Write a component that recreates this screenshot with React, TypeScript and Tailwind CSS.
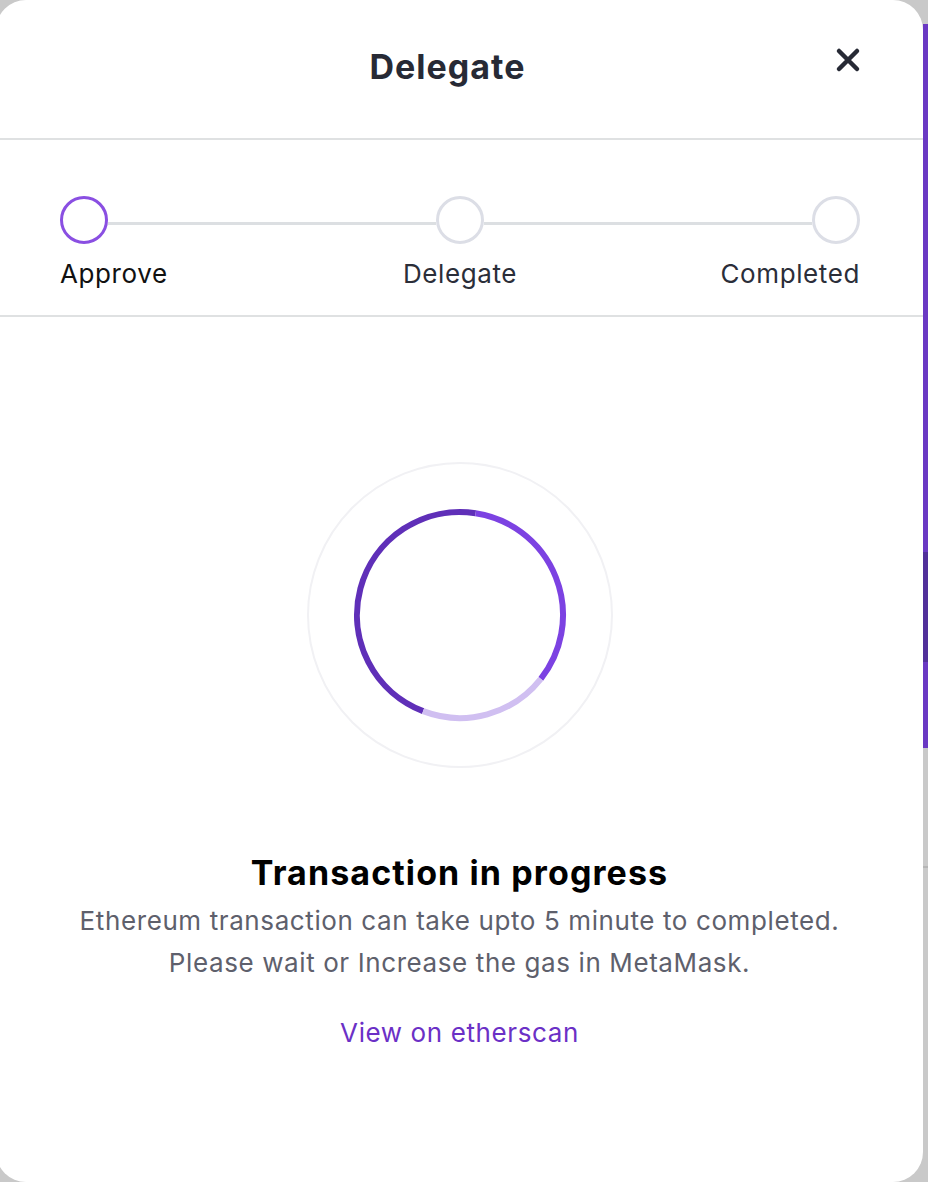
import React from 'react';

const steps = [
  { name: 'Approve', active: true },
  { name: 'Delegate', active: false },
  { name: 'Completed', active: false },
];

const StepCircle = ({ active }: { active: boolean }) => (
  <div
    className={
      active
        ? 'w-[48px] h-[48px] rounded-full border-[3px] border-[#8a4fe2] shrink-0'
        : 'w-[48px] h-[48px] rounded-full border-[3px] border-[#dcdee6] shrink-0'
    }
  />
);

const Spinner = () => (
  <svg width="310" height="310" viewBox="0 0 310 310" fill="none">
    <circle cx="155" cy="155" r="152" stroke="#f1f1f4" strokeWidth="2" />
    <path d="M118.09 251.16 A103 103 0 0 1 170.58 53.18" stroke="#5f2fb8" strokeWidth="6" />
    <path d="M170.58 53.18 A103 103 0 0 1 235.83 218.84" stroke="#7c42e2" strokeWidth="6" />
    <path d="M235.83 218.84 A103 103 0 0 1 118.09 251.16" stroke="#d0bff1" strokeWidth="6" />
  </svg>
);

const App = () => {
  return (
    <div
      className="w-[928px] h-[1182px] flex bg-[#c9c9c9] overflow-hidden"
      style={{ fontFamily: 'Inter, "Noto Sans", sans-serif' }}
    >
      <div className="w-[927px] -ml-[4px] shrink-0 h-full bg-white rounded-[30px] flex flex-col">
        {/* Header */}
        <div className="relative h-[138px] flex items-center justify-center pr-[24px] pb-[6px]">
          <h1 className="text-[34px] font-bold text-[#272a35] tracking-[1px]">Delegate</h1>
          <button className="absolute right-[62px] top-[47px] w-[26px] h-[26px] flex items-center justify-center">
            <svg width="26" height="26" viewBox="0 0 26 26" fill="none">
              <path d="M4 4 L22 22 M22 4 L4 22" stroke="#272a35" strokeWidth="4.5" strokeLinecap="round" />
            </svg>
          </button>
        </div>
        <div className="h-[2px] bg-[#dfe1e2]" />

        {/* Stepper */}
        <div className="pl-[64px] pr-[63px] pt-[56px] h-[175px]">
          <div className="flex items-center">
            {steps.map((s, i) => (
              <React.Fragment key={s.name}>
                <StepCircle active={s.active} />
                {i < steps.length - 1 && <div className="flex-1 h-[3px] bg-[#dcdfe2] mt-[6px]" />}
              </React.Fragment>
            ))}
          </div>
          <div className="grid grid-cols-3 mt-[14px] text-[26px] leading-[32px] tracking-[0.6px]">
            <span className="text-left text-[#111111]">Approve</span>
            <span className="text-center text-[#2b2e39]">Delegate</span>
            <span className="text-right text-[#2b2e39]">Completed</span>
          </div>
        </div>
        <div className="h-[2px] bg-[#dfe1e2]" />

        {/* Progress */}
        <div className="flex flex-col items-center pt-[143px]">
          <Spinner />
          <h2 className="mt-[83px] text-[34px] leading-[40px] font-bold text-black tracking-[1.1px]">
            Transaction in progress
          </h2>
          <p className="mt-[7px] text-[26px] leading-[42px] text-[#5e606c] text-center tracking-[0.6px]">
            Ethereum transaction can take upto 5 minute to completed.
            <br />
            Please wait or Increase the gas in MetaMask.
          </p>
          <a className="mt-[33px] text-[26px] leading-[32px] text-[#6b30c6] tracking-[0.6px]">View on etherscan</a>
        </div>
      </div>

      {/* page behind the modal */}
      <div className="flex-1 flex flex-col">
        <div className="h-[24px]" />
        <div className="h-[528px] bg-[#6a39c3]" />
        <div className="h-[110px] bg-[#51309a]" />
        <div className="h-[86px] bg-[#6a39c3]" />
        <div className="h-[118px]" />
        <div className="h-[2px] bg-[#b5b5b5]" />
      </div>
    </div>
  );
};

export default App;
